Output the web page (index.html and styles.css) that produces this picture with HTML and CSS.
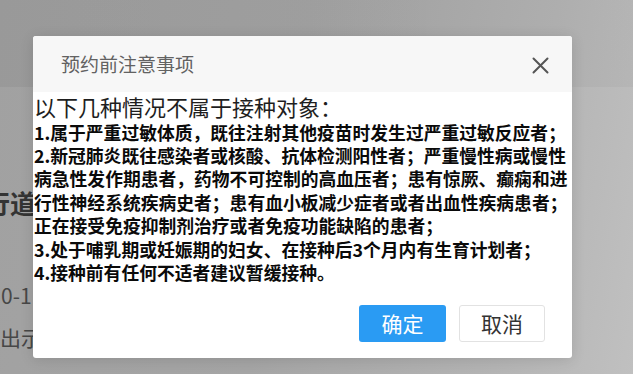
FILE: index.html
```html
<!DOCTYPE html>
<html lang="zh-CN">
<head>
<meta charset="utf-8">
<title>预约前注意事项</title>
<link rel="stylesheet" href="styles.css">
</head>
<body>
<div class="page">
  <div class="topbar"></div>
  <div class="content">
    <div class="place-name">行道</div>
    <div class="date">0-1</div>
    <div class="hint">出示</div>
  </div>
</div>

<div class="mask">
  <div class="dialog">
    <div class="dialog-head">
      <span class="dialog-title">预约前注意事项</span>
      <svg class="close" width="17" height="17" viewBox="0 0 17 17" aria-hidden="true">
        <path d="M1.5 1.5 L15.5 15.5 M15.5 1.5 L1.5 15.5" stroke="#555" stroke-width="2" stroke-linecap="round" fill="none"/>
      </svg>
    </div>
    <div class="dialog-body">
      <div class="lead">以下几种情况不属于接种对象：</div>
      <div class="items">
        <div class="item">1.属于严重过敏体质，既往注射其他疫苗时发生过严重过敏反应者；</div>
        <div class="item">2.新冠肺炎既往感染者或核酸、抗体检测阳性者；严重慢性病或慢性<br>病急性发作期患者，药物不可控制的高血压者；患有惊厥、癫痫和进<br>行性神经系统疾病史者；患有血小板减少症者或者出血性疾病患者；<br>正在接受免疫抑制剂治疗或者免疫功能缺陷的患者；</div>
        <div class="item">3.处于哺乳期或妊娠期的妇女、在接种后3个月内有生育计划者；</div>
        <div class="item">4.接种前有任何不适者建议暂缓接种。</div>
      </div>
    </div>
    <div class="dialog-foot">
      <button class="btn btn-primary">确定</button>
      <button class="btn btn-default">取消</button>
    </div>
  </div>
</div>
</body>
</html>
```
FILE: styles.css
```css
html, body {
  margin: 0;
  padding: 0;
}
body {
  width: 633px;
  height: 374px;
  overflow: hidden;
  position: relative;
  font-family: "Noto Sans CJK SC", "Noto Sans", sans-serif;
  background: linear-gradient(100deg, #a1a1a1 0%, #a5a5a5 45%, #b4b4b4 80%, #c0c0c0 100%);
}
.page {
  width: 633px;
  height: 374px;
}
.topbar {
  height: 87px;
  background: linear-gradient(90deg, rgba(0,0,0,0.05), rgba(0,0,0,0.03));
}
.content {
  display: flex;
  flex-direction: column;
  align-items: flex-start;
}
.place-name {
  margin-top: 101px;
  margin-left: -16px;
  font-size: 26px;
  font-weight: bold;
  line-height: 30px;
  color: #343434;
}
.date {
  margin-top: 65px;
  margin-left: 1px;
  font-size: 21px;
  line-height: 24px;
  color: #474747;
}
.hint {
  margin-top: 18px;
  font-size: 21px;
  line-height: 24px;
  color: #474747;
}
.mask {
  position: absolute;
  inset: 0;
}
.dialog {
  position: absolute;
  left: 33px;
  top: 36px;
  width: 539px;
  background: #fff;
  border-radius: 3px;
  overflow: hidden;
  box-shadow: 0 2px 14px rgba(0,0,0,0.12);
}
.dialog-head {
  height: 56px;
  background: #f7f7f7;
  display: flex;
  align-items: center;
  justify-content: space-between;
  padding: 0 23px 0 28px;
}
.dialog-title {
  font-size: 19px;
  line-height: 24px;
  color: #626262;
}
.close {
  display: block;
  margin-top: 2px;
}
.dialog-body {
  padding: 0 1px;
  color: #000;
}
.lead {
  font-size: 22px;
  line-height: 28.6px;
  color: #1e1e1e;
  white-space: nowrap;
}
.items {
  font-size: 17.8px;
  line-height: 23.4px;
  font-weight: bold;
  color: #0a0a0a;
  white-space: nowrap;
}
.dialog-foot {
  display: flex;
  justify-content: flex-end;
  gap: 13px;
  padding: 20.5px 27px 16px;
}
.btn {
  height: 37px;
  width: 87px;
  border-radius: 3px;
  font-family: "Noto Sans CJK SC", sans-serif;
  font-size: 21px;
  line-height: 1;
  padding: 0;
  cursor: pointer;
}
.btn-primary {
  background: #2a9bf3;
  border: none;
  color: #fff;
}
.btn-default {
  width: 86px;
  background: #fff;
  border: 1px solid #e2e2e2;
  color: #333;
}
```
